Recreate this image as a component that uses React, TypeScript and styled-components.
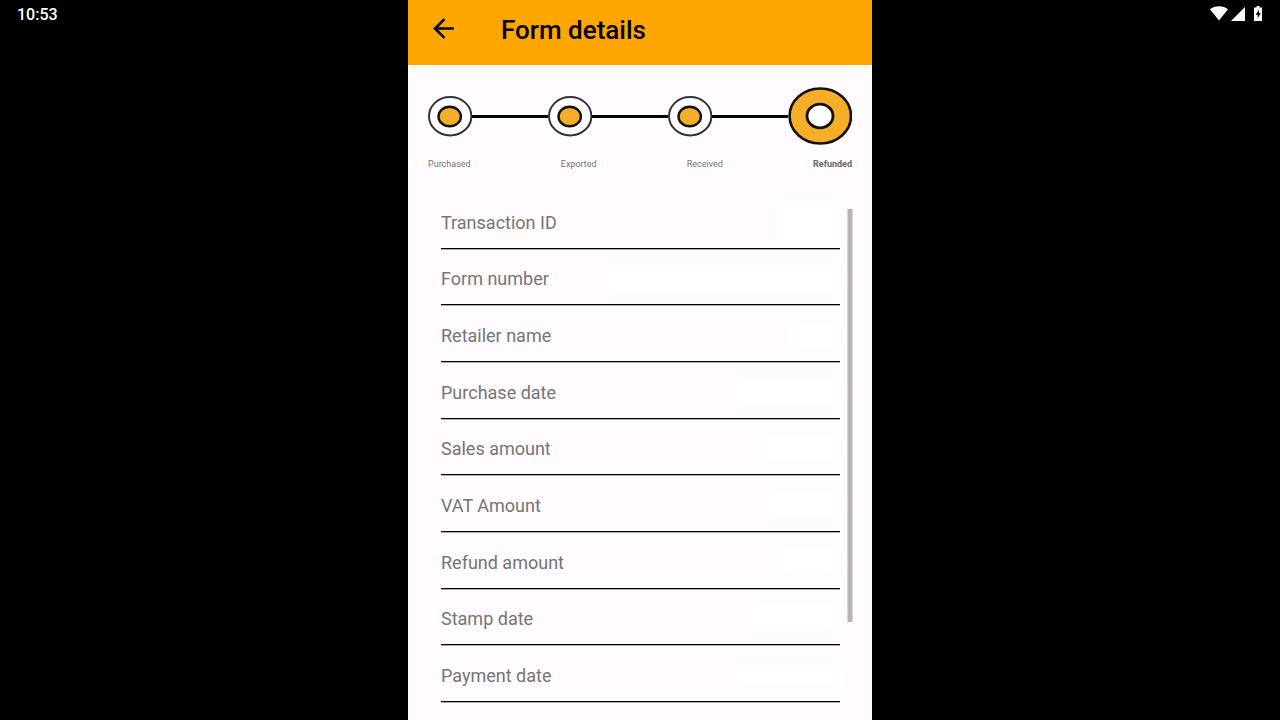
import React from 'react';
import styled, { createGlobalStyle } from 'styled-components';

const GlobalStyle = createGlobalStyle`
  * { box-sizing: border-box; }
  body {
    margin: 0;
    background: #000;
    font-family: Roboto, "Liberation Sans", sans-serif;
  }
`;

const Screen = styled.div`
  display: grid;
  grid-template-columns: 1fr minmax(0, 464px) 1fr;
  height: 100vh;
  overflow: hidden;
  background: #000;
`;

const Clock = styled.time`
  padding: 5px 17px;
  font-size: 16px;
  line-height: 20px;
  font-weight: 500;
  color: #fff;
`;

const StatusIcons = styled.div`
  display: flex;
  justify-content: flex-end;
  align-items: flex-start;
  padding: 6px 18px 0 0;
  svg { display: block; fill: #fff; }
`;

const WifiIcon = styled.svg`
  margin-right: 3px;
`;

const SignalIcon = styled.svg`
  margin-right: 9px;
`;

const AppPanel = styled.main`
  background: #fffbff;
  overflow: hidden;
`;

const TopBar = styled.header`
  display: flex;
  align-items: center;
  gap: 34px;
  height: 65px;
  padding: 0 12px 6px;
  background: #ffa600;
`;

const BackButton = styled.button`
  display: flex;
  padding: 7px 8px 9px;
  border: 0;
  background: none;
  color: #000;
  cursor: pointer;
`;

const Title = styled.h1`
  margin: 0;
  font-size: 26px;
  line-height: 32px;
  font-weight: 500;
  color: #000;
`;

const Progress = styled.section`
  padding: 22px 20px 0;
`;

const Track = styled.div`
  display: flex;
  align-items: center;
  svg { display: block; flex: none; }
`;

const Connector = styled.span`
  flex: 1;
  height: 3px;
  background: #000;
`;

const StepLabels = styled.ol`
  display: flex;
  justify-content: space-between;
  margin: 13px 0 0;
  padding: 0;
  list-style: none;
`;

const StepLabel = styled.li<{ $current?: boolean }>`
  font-size: 9px;
  line-height: 12px;
  font-weight: ${(p) => (p.$current ? 700 : 400)};
  color: ${(p) => (p.$current ? '#666' : '#757575')};
`;

const Details = styled.section`
  position: relative;
  padding: 22px 32px 0 33px;
`;

const Rows = styled.dl`
  display: grid;
  grid-template-rows: repeat(9, 1fr);
  height: 510px;
  margin: 0;
`;

const Row = styled.div`
  display: flex;
  justify-content: space-between;
  align-items: center;
  padding-top: 6px;
  border-bottom: 1px solid #000;
  box-shadow: 0 1px 0 rgba(0, 0, 0, 0.3);
`;

const Term = styled.dt`
  font-size: 18px;
  line-height: 24px;
  color: #757575;
`;

const Value = styled.dd<{ $width: number; $height: number }>`
  width: ${(p) => p.$width}px;
  height: ${(p) => p.$height}px;
  margin: 0 -2px 2px 0;
  background: #fff;
`;

const ScrollThumb = styled.div`
  position: absolute;
  top: 39px;
  right: 19px;
  width: 6px;
  height: 413px;
  background: #b4b4b4;
  border: solid #d6d6d6;
  border-width: 0 1px;
`;

const StepDone = () => (
  <svg width="44" height="58" viewBox="0 0 44 58" aria-hidden="true">
    <ellipse cx="22.2" cy="29.2" rx="21.2" ry="19.2" fill="#fff" stroke="#333" strokeWidth="2" />
    <ellipse cx="21.7" cy="29.5" rx="11.2" ry="9.8" fill="#f5ae28" stroke="#111" strokeWidth="2.4" />
  </svg>
);

const StepCurrent = () => (
  <svg width="64" height="58" viewBox="0 0 64 58" aria-hidden="true">
    <ellipse cx="32.3" cy="29" rx="30.7" ry="27.5" fill="#f5ae28" stroke="#111" strokeWidth="2.6" />
    <ellipse cx="32" cy="29" rx="13" ry="11.8" fill="#fff" stroke="#111" strokeWidth="2.8" />
  </svg>
);

const details = [
  { label: 'Transaction ID', width: 66, height: 42 },
  { label: 'Form number', width: 234, height: 30 },
  { label: 'Retailer name', width: 52, height: 22 },
  { label: 'Purchase date', width: 108, height: 24 },
  { label: 'Sales amount', width: 80, height: 24 },
  { label: 'VAT Amount', width: 74, height: 22 },
  { label: 'Refund amount', width: 63, height: 24 },
  { label: 'Stamp date', width: 91, height: 24 },
  { label: 'Payment date', width: 105, height: 20 },
];

export default function App() {
  return (
    <>
      <GlobalStyle />
      <Screen>
        <Clock>10:53</Clock>
        <AppPanel>
          <TopBar>
            <BackButton aria-label="Back">
              <svg width="31" height="31" viewBox="0 0 24 24" fill="currentColor">
                <path d="M20 11H7.83l5.59-5.59L12 4l-8 8 8 8 1.41-1.41L7.83 13H20v-2z" />
              </svg>
            </BackButton>
            <Title>Form details</Title>
          </TopBar>
          <Progress>
            <Track>
              <StepDone />
              <Connector />
              <StepDone />
              <Connector />
              <StepDone />
              <Connector />
              <StepCurrent />
            </Track>
            <StepLabels>
              <StepLabel>Purchased</StepLabel>
              <StepLabel>Exported</StepLabel>
              <StepLabel>Received</StepLabel>
              <StepLabel $current>Refunded</StepLabel>
            </StepLabels>
          </Progress>
          <Details>
            <Rows>
              {details.map((d) => (
                <Row key={d.label}>
                  <Term>{d.label}</Term>
                  <Value $width={d.width} $height={d.height} />
                </Row>
              ))}
            </Rows>
            <ScrollThumb />
          </Details>
        </AppPanel>
        <StatusIcons>
          <WifiIcon width="18" height="15" viewBox="0 0 18 15" aria-label="Wi-Fi">
            <path d="M9 14.5L0 3.3C2.4 1.3 5.5.2 9 .2s6.600 1.100 9 3.100z" />
          </WifiIcon>
          <SignalIcon width="14" height="15" viewBox="0 0 14 15" aria-label="Signal">
            <path d="M0 15L14 1v14z" />
          </SignalIcon>
          <svg width="8" height="15" viewBox="0 0 8 15" aria-label="Battery charging">
            <path d="M2.500 0h3v1.500H8V15H0V1.500h2.500z" />
            <path d="M5 3.500L1.700 8.800h2v3.700l3-5.500H4.800z" fill="#000" />
          </svg>
        </StatusIcons>
      </Screen>
    </>
  );
}
